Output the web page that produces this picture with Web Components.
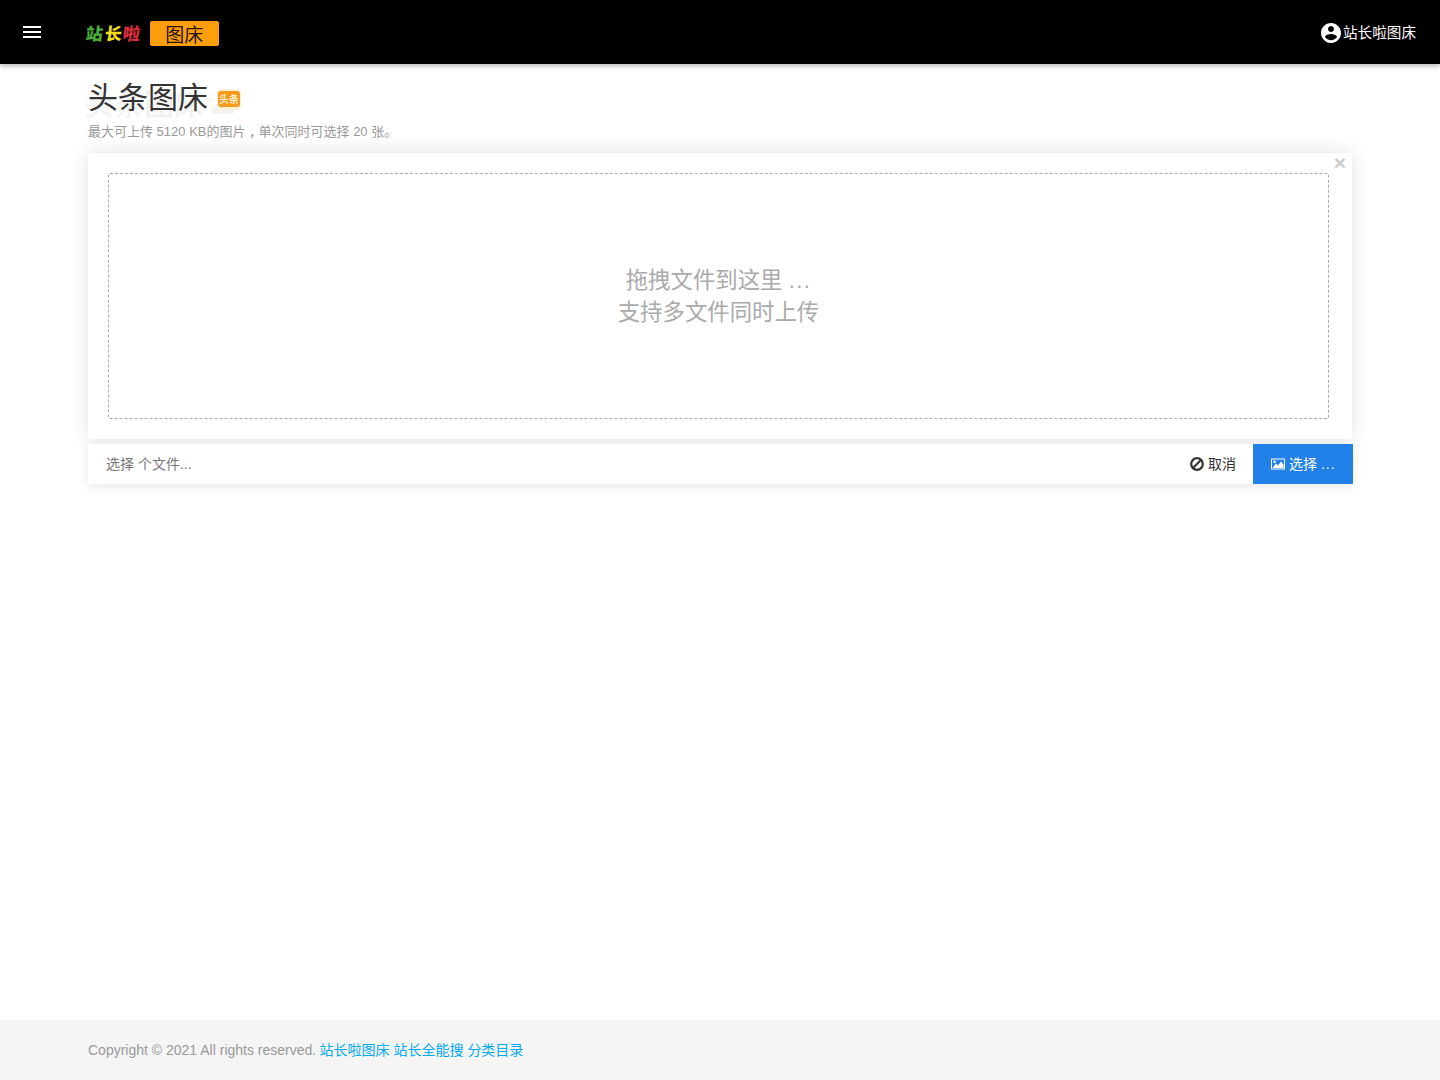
<!DOCTYPE html>
<html lang="zh">
<head>
<meta charset="utf-8">
<title>头条图床</title>
<style>
  html, body { margin: 0; padding: 0; background: #fff; }
  body {
    font-family: "Liberation Sans", "Noto Sans CJK SC", sans-serif;
    font-size: 14px;
    color: #333;
  }
  #page { display: flex; flex-direction: column; min-height: 1080px; }
  #page > main-content { flex: 1; }
</style>
</head>
<body>
<div id="page">
  <top-bar></top-bar>
  <main-content>
    <page-title heading="头条图床"></page-title>
    <upload-box></upload-box>
  </main-content>
  <page-footer></page-footer>
</div>

<script>
class TopBar extends HTMLElement {
  connectedCallback() {
    this.attachShadow({ mode: 'open' });
    this.shadowRoot.innerHTML = `
      <style>
        :host {
          display: flex;
          align-items: center;
          height: 64px;
          background: #000;
          color: #fff;
          box-shadow: 0 2px 5px rgba(0,0,0,.3);
          position: relative;
          z-index: 2;
        }
        .menu { width: 24px; height: 24px; margin-left: 20px; display: block; }
        .logo { display: flex; align-items: center; margin-left: 42px; margin-top: 2px; }
        .word { font-family: "Noto Sans CJK SC", sans-serif; font-weight: 900; font-size: 17px; line-height: 24px; width: 18.6px; display: block; transform: skewX(-6deg); }
        .tag {
          margin-left: 8px;
          width: 69px;
          height: 25px;
          background: #ff9e0c;
          border-radius: 2px;
          color: #231405;
          font-family: "Noto Sans CJK SC", sans-serif;
          font-size: 19px;
          line-height: 25px;
          text-align: center;
        }
        .user { margin-left: auto; margin-right: 24px; display: flex; align-items: center; font-size: 14.6px; color: #fff; }
        .user svg { width: 24px; height: 24px; display: block; margin-top: 2px; }
        .user span { margin-bottom: 2px; }
      </style>
      <svg class="menu" viewBox="0 0 24 24" fill="#fff"><path d="M3 18h18v-2H3v2zm0-5h18v-2H3v2zm0-7v2h18V6H3z"/></svg>
      <div class="logo">
        <span class="word" style="color:#4caf3c">站</span>
        <span class="word" style="color:#f2dc1d">长</span>
        <span class="word" style="color:#e0303c">啦</span>
        <span class="tag">图床</span>
      </div>
      <div class="user">
        <svg viewBox="0 0 24 24" fill="#fff"><path d="M12 2C6.48 2 2 6.48 2 12s4.48 10 10 10 10-4.48 10-10S17.52 2 12 2zm0 3c1.66 0 3 1.34 3 3s-1.34 3-3 3-3-1.34-3-3 1.34-3 3-3zm0 14.2c-2.5 0-4.71-1.28-6-3.22.03-1.99 4-3.08 6-3.08 1.99 0 5.97 1.09 6 3.08-1.29 1.94-3.5 3.22-6 3.22z"/></svg>
        <span>站长啦图床</span>
      </div>
    `;
  }
}

class MainContent extends HTMLElement {
  connectedCallback() {
    this.attachShadow({ mode: 'open' });
    this.shadowRoot.innerHTML = `
      <style>
        :host { display: block; padding: 0 87px 0 88px; }
      </style>
      <slot></slot>
    `;
  }
}

class PageTitle extends HTMLElement {
  connectedCallback() {
    this.attachShadow({ mode: 'open' });
    this.shadowRoot.innerHTML = `
      <style>
        :host { display: block; padding-top: 14px; }
        .row { display: flex; align-items: center; height: 40px; }
        h1 {
          margin: 0;
          font-size: 30px;
          font-weight: 400;
          line-height: 40px;
          color: #333;
          text-shadow: -4px 7px 2px rgba(0,0,0,.08);
        }
        svg { width: 32px; height: 32px; display: block; margin-left: 2px; margin-top: 8px; overflow: visible; }
        svg text { font-family: "Noto Sans CJK SC", sans-serif; font-weight: 700; font-size: 10px; fill: #ffeecb; }
        p { margin: 5px 0 0; font-size: 13px; line-height: 18px; color: #999; }
        .comma { font-feature-settings: "halt"; margin: 0 3px 0 3.5px; }
      </style>
      <div class="row">
        <h1>${this.getAttribute('heading')}</h1>
        <svg viewBox="0 0 32 32">
          <rect x="2" y="20" width="22" height="8" rx="2" fill="#f1eeea" opacity=".7"/>
          <rect x="7" y="3" width="24" height="21" rx="4" fill="#fdeed8"/>
          <rect x="8" y="5" width="22" height="16" rx="3" fill="#f59a1c"/>
          <text x="9" y="17">头条</text>
        </svg>
      </div>
      <p>最大可上传 5120 KB的图片<span class="comma">，</span>单次同时可选择 20 张。</p>
    `;
  }
}

class UploadBox extends HTMLElement {
  connectedCallback() {
    this.attachShadow({ mode: 'open' });
    this.shadowRoot.innerHTML = `
      <style>
        :host { display: block; margin-top: 12px; }
        .card {
          position: relative;
          box-sizing: border-box;
          width: 1264px;
          height: 286px;
          padding: 20px 23px 20px 20px;
          background: #fff;
          box-shadow: 0 0 18px rgba(0,0,0,.12);
        }
        .close {
          position: absolute;
          top: 0;
          right: 6px;
          font-size: 21px;
          line-height: 20px;
          font-weight: 700;
          color: #ccc;
        }
        .drop {
          box-sizing: border-box;
          height: 100%;
          padding-top: 2px;
          border: 1px dashed #aaa;
          border-radius: 2px;
          display: flex;
          flex-direction: column;
          align-items: center;
          justify-content: center;
          font-size: 22.4px;
          line-height: 32px;
          color: #aaa;
        }
        .dots { letter-spacing: 1.3px; }
        .bar {
          display: flex;
          align-items: stretch;
          height: 40px;
          margin-top: 5px;
          background: #fff;
          box-shadow: 0 2px 10px rgba(0,0,0,.1);
          position: relative;
        }
        .caption { flex: 1; padding-left: 18px; line-height: 40px; color: #777; font-size: 14px; }
        .cancel, .browse { display: flex; align-items: center; font-size: 14px; }
        .cancel { width: 78px; box-sizing: border-box; padding-left: 15px; color: #333; }
        .browse { width: 100px; box-sizing: border-box; padding-left: 18px; background: #2181e8; color: #fff; }
        .cancel > span, .browse > span { margin-bottom: 2px; }
        .browse .dots { letter-spacing: 1px; }
        svg { display: block; flex: none; }
        .cancel svg { width: 14px; height: 14px; margin-right: 4px; }
        .browse svg { width: 14px; height: 14px; margin-right: 4px; }
      </style>
      <div class="card">
        <span class="close">×</span>
        <div class="drop">
          <div>拖拽文件到这里 <span class="dots">...</span></div>
          <div>支持多文件同时上传</div>
        </div>
      </div>
      <div class="bar">
        <div class="caption">选择 个文件...</div>
        <div class="cancel">
          <svg viewBox="0 0 14 14"><circle cx="7" cy="7" r="5.8" fill="none" stroke="#333" stroke-width="2.2"/><path d="M3 11 11 3" stroke="#333" stroke-width="2.2"/></svg>
          <span>取消</span>
        </div>
        <div class="browse">
          <svg viewBox="0 0 14 14"><path fill="#fff" fill-rule="evenodd" d="M0 1.5h14v11H0zM1 2.5v9h12v-9z"/><path fill="#fff" d="M1.5 11 5 6.5 7 8.5 10 4.5 12.5 7.5V11z"/><circle cx="3.6" cy="4.7" r="1.3" fill="#fff"/></svg>
          <span>选择 <span class="dots">...</span></span>
        </div>
      </div>
    `;
  }
}

class PageFooter extends HTMLElement {
  connectedCallback() {
    this.attachShadow({ mode: 'open' });
    this.shadowRoot.innerHTML = `
      <style>
        :host {
          display: block;
          box-sizing: border-box;
          height: 60px;
          padding: 0 88px;
          background: #f5f5f5;
          line-height: 60px;
          font-size: 14px;
          color: #999;
        }
        a { color: #03a9f4; text-decoration: none; }
        a:first-of-type { margin-left: -0.5px; }
      </style>
      Copyright © 2021 All rights reserved.
      <a href="#">站长啦图床</a>
      <a href="#">站长全能搜</a>
      <a href="#">分类目录</a>
    `;
  }
}

customElements.define('top-bar', TopBar);
customElements.define('main-content', MainContent);
customElements.define('page-title', PageTitle);
customElements.define('upload-box', UploadBox);
customElements.define('page-footer', PageFooter);
</script>
</body>
</html>
